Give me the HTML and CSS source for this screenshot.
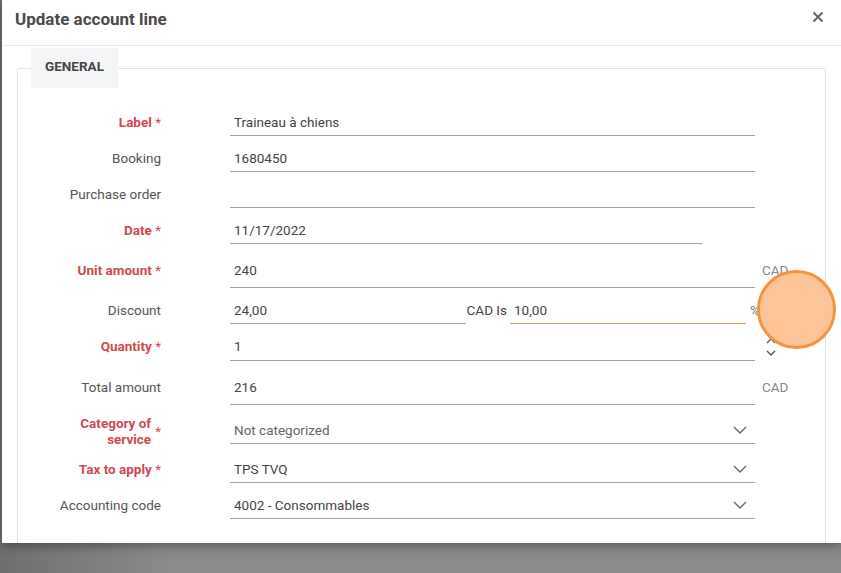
FILE: index.html
```html
<!DOCTYPE html>
<html lang="en">
<head>
  <meta charset="UTF-8">
  <title>Update account line</title>
  <link rel="stylesheet" href="styles.css">
</head>
<body>

  <!-- Modal -->
  <div class="modal">
    <header class="modal-header">
      <h2>Update account line</h2>
      <button class="close" aria-label="Close">
        <svg width="12" height="12" viewBox="0 0 12 12"><path d="M1.5 1.5l9 9M10.5 1.5l-9 9" stroke="#666" stroke-width="2" fill="none"/></svg>
      </button>
    </header>

    <div class="modal-body">
      <fieldset class="section">
        <legend>GENERAL</legend>

        <div class="form">
          <div class="row">
            <label class="label required">Label <span class="star">*</span></label>
            <div class="field">Traineau à chiens</div>
          </div>

          <div class="row">
            <label class="label">Booking</label>
            <div class="field">1680450</div>
          </div>

          <div class="row">
            <label class="label">Purchase order</label>
            <div class="field"></div>
          </div>

          <div class="row">
            <label class="label required">Date <span class="star">*</span></label>
            <div class="field field-date">11/17/2022</div>
          </div>

          <div class="row row-suffix">
            <label class="label required">Unit amount <span class="star">*</span></label>
            <div class="field field-tall">240</div>
            <span class="suffix">CAD</span>
          </div>

          <div class="row">
            <label class="label">Discount</label>
            <div class="field field-half">24,00</div>
            <span class="between">CAD Is</span>
            <div class="field field-half focused">10,00</div>
            <span class="percent">%</span>
          </div>

          <div class="row">
            <label class="label required">Quantity <span class="star">*</span></label>
            <div class="field field-qty">1</div>
            <div class="spinner">
              <svg width="10" height="6" viewBox="0 0 10 6"><path d="M1 5l4-4 4 4" stroke="#555" stroke-width="1.4" fill="none"/></svg>
              <svg width="10" height="6" viewBox="0 0 10 6"><path d="M1 1l4 4 4-4" stroke="#555" stroke-width="1.4" fill="none"/></svg>
            </div>
          </div>

          <div class="row row-suffix">
            <label class="label">Total amount</label>
            <div class="field field-tall">216</div>
            <span class="suffix">CAD</span>
          </div>

          <div class="row row-center">
            <label class="label required"><span class="label-text">Category of<br>service</span><span class="star">*</span></label>
            <div class="field select placeholder">
              Not categorized
              <svg width="14" height="8" viewBox="0 0 14 8"><path d="M1 1l6 6 6-6" stroke="#666" stroke-width="1.4" fill="none"/></svg>
            </div>
          </div>

          <div class="row">
            <label class="label required">Tax to apply <span class="star">*</span></label>
            <div class="field select">
              TPS TVQ
              <svg width="14" height="8" viewBox="0 0 14 8"><path d="M1 1l6 6 6-6" stroke="#666" stroke-width="1.4" fill="none"/></svg>
            </div>
          </div>

          <div class="row">
            <label class="label">Accounting code</label>
            <div class="field select">
              4002 - Consommables
              <svg width="14" height="8" viewBox="0 0 14 8"><path d="M1 1l6 6 6-6" stroke="#666" stroke-width="1.4" fill="none"/></svg>
            </div>
          </div>
        </div>
      </fieldset>
    </div>
  </div>

  <!-- click highlight -->
  <div class="pointer"></div>

</body>
</html>
```

FILE: styles.css
```css
body {
  margin: 0;
  height: 573px;
  overflow: hidden;
  font-family: Roboto, 'Liberation Sans', sans-serif;
  background: linear-gradient(to right, #6f6f6f, #8a8a8a 20%, #8a8a8a);
  position: relative;
}

.modal {
  margin-left: 2px;
  width: 839px;
  height: 543px;
  background: #fff;
  overflow: hidden;
  box-shadow: 0 3px 10px rgba(0, 0, 0, 0.35);
}

.modal-header {
  height: 45px;
  border-bottom: 1px solid #e8e8e8;
  display: flex;
  align-items: center;
  justify-content: space-between;
  padding: 0 17px 0 13px;
}

.modal-header h2 {
  margin: 0;
  font-size: 17px;
  font-weight: 700;
  color: #4a4a4a;
  position: relative;
  top: -4px;
}

.close {
  border: none;
  background: none;
  padding: 0;
  width: 12px;
  height: 12px;
  cursor: pointer;
  position: relative;
  top: -6px;
}

.close svg {
  display: block;
}

.modal-body {
  padding: 2px 15px 0;
}

.section {
  margin: 0;
  padding: 0 0 60px;
  border: 1px solid #e3e3e3;
  border-radius: 2px;
}

.section legend {
  margin-left: 13px;
  padding: 10px 14px 14px;
  line-height: 16px;
  font-size: 13.5px;
  font-weight: 700;
  color: #444;
  background: #f4f5f7;
}

.form {
  display: flex;
  flex-direction: column;
  gap: 10px;
  padding-top: 22px;
}

.row {
  display: flex;
  align-items: flex-start;
  font-size: 13.5px;
  line-height: 16px;
  color: #444;
}

.row-suffix {
  margin-top: 4px;
}

.row-center {
  align-items: center;
}

.label {
  flex: 0 0 143px;
  margin-right: 69px;
  padding-top: 4px;
  text-align: right;
  color: #555;
  white-space: nowrap;
}

.row-center .label {
  padding-top: 0;
  display: flex;
  justify-content: flex-end;
  align-items: center;
  gap: 4px;
}

.required {
  color: #cf4a50;
  font-weight: 700;
}

.star {
  font-weight: 400;
}

.field {
  flex: 0 0 auto;
  width: 525px;
  box-sizing: border-box;
  height: 26px;
  padding: 4px 4px 0;
  border-bottom: 1px solid #a3a3a3;
  white-space: nowrap;
}

.field-date {
  width: 472px;
}

.field-tall {
  height: 30px;
}

.field-qty {
  height: 27px;
}

.field-half {
  width: 236px;
}

.focused {
  border-bottom-color: #e89a55;
}

.between {
  flex: 0 0 41px;
  padding: 4px 0 0;
  text-align: right;
  white-space: nowrap;
}

.field.focused {
  margin-left: 3px;
}

.percent {
  padding: 4px 0 0 4px;
  color: #777;
}

.suffix {
  padding: 4px 0 0 7px;
  color: #888;
}

.spinner {
  display: flex;
  flex-direction: column;
  gap: 6px;
  padding: 4px 0 0 11px;
}

.spinner svg {
  display: block;
}

.select {
  display: flex;
  justify-content: space-between;
  align-items: center;
  padding: 0 8px 2px 4px;
}

.placeholder {
  color: #666;
}

.pointer {
  position: absolute;
  left: 757px;
  top: 270px;
  width: 73px;
  height: 73px;
  border-radius: 50%;
  background: #fdc597;
  border: 3px solid #f5943f;
}
```
